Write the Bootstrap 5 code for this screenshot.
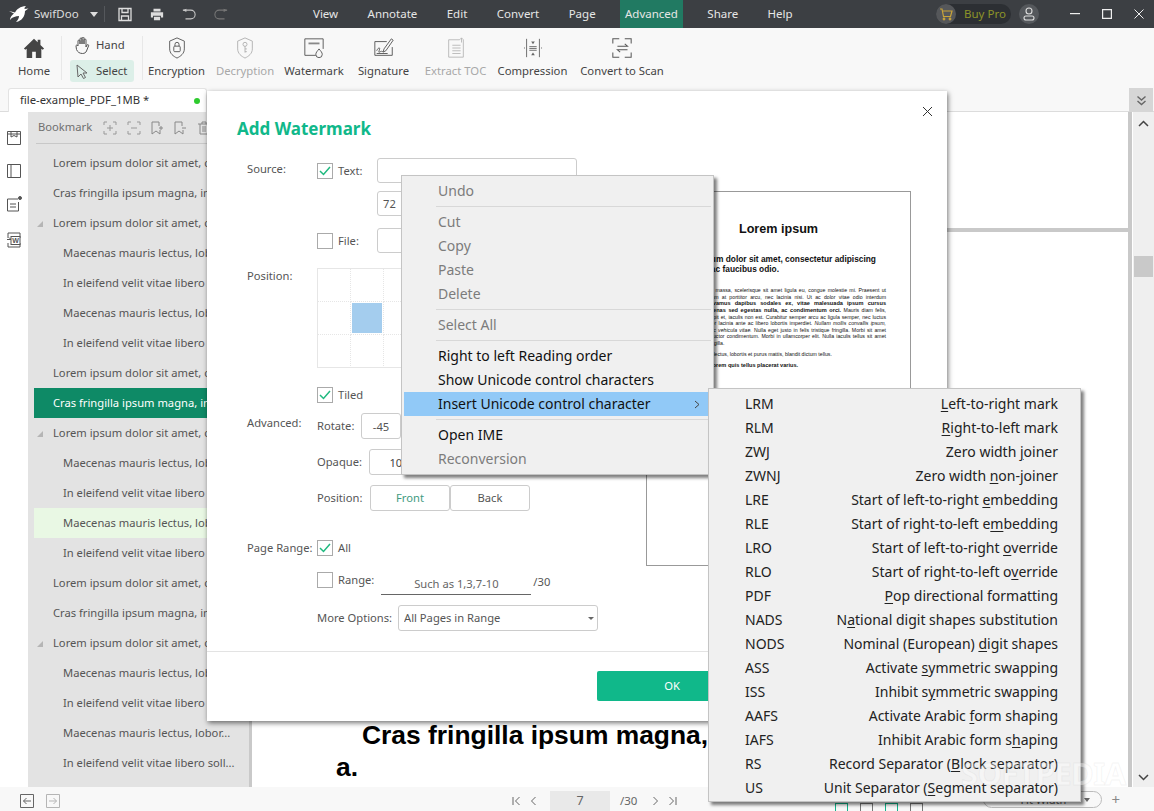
<!DOCTYPE html>
<html lang="en">
<head>
<meta charset="utf-8">
<title>SwifDoo</title>
<link href="https://cdn.jsdelivr.net/npm/bootstrap@5.3.0/dist/css/bootstrap.min.css" rel="stylesheet">
<style>
html,body{height:811px;overflow:hidden}
body{font-family:"Noto Sans","Open Sans",sans-serif;font-size:12px;color:#444;background:#fff}
.app-root{position:relative;height:811px;width:1154px;overflow:hidden}
.title-bar{height:28px;background:#3c3f43;color:#e8e8e8;flex:none}
.brand-name{width:56px;margin-left:4px;color:#ddd;font-size:11.5px}
.tb-sep{width:1px;height:16px;background:#55585c;margin:0 13px 0 6px}
.qa-icon{width:14px;height:15px;margin-right:18px;flex:none}
.qa-last{margin-right:0}
.top-nav{margin-left:80px;gap:19.4px}
.menu-item{height:28px;line-height:28px;font-size:11.5px;color:#e6e6e6;padding:0 5px;flex:none}
.menu-on{background:#217a62}
.top-right{padding-right:10px}
.buy-pill{height:20px;width:75px;border-radius:10px;background:#2c2f33;color:#8c9428;font-size:11.5px;flex:none}
.buy-circle{width:20px;height:20px;border-radius:50%;background:#55575a;margin-right:8px}
.user-circle{width:20px;height:20px;border-radius:50%;background:#55585c;margin-left:8px}
.win-min{margin-left:31px}
.win-next{margin-left:22px}
.ribbon{height:60px;background:#f8f8f8;flex:none;padding-left:9px}
.rib-tool{display:flex;flex-direction:column;align-items:center;flex:none;height:60px;padding-top:9px;color:#444;white-space:nowrap;font-size:11.3px}
.rib-tool svg{height:22px;display:block}
.rib-tool span{margin-top:4px;line-height:16px}
.rib-off{color:#a8a8a8}
.rib-sep{width:1px;height:44px;background:#e8e8e8;margin:8px 0 0 2px;flex:none}
.rib-sep-b{margin-left:8px}
.mode-col{margin:5px 0 0 8px;gap:3px}
.mode-row{height:22px;width:64px;padding-left:5px;font-size:11.3px;border-radius:3px;gap:6px}
.mode-row svg{width:15px;flex:none}
.mode-hand{height:24px}
.mode-on{background:#dcefe8}
.w50{width:50px}
.t-enc{width:57px;margin-left:5px}
.t-dec{width:58px;margin-left:11px}
.t-wat{width:58px;margin-left:11px}
.t-sig{width:51px;margin-left:15px}
.t-toc{width:61px;margin-left:16px}
.t-com{width:69px;margin-left:12px}
.t-con{width:84px;margin-left:13px}
.tab-row{height:24px;background:#f8f8f8;flex:none;border-bottom:1px solid #dcdcdc;position:relative}
.doc-tab{width:199px;height:24px;margin-left:8px;background:#fff;border:1px solid #e3e3e3;border-bottom:0;border-radius:3px 3px 0 0;padding:0 6px 0 11px;font-size:11.3px;color:#333}
.tab-dot{width:6px;height:6px;background:#2ecb2e;border-radius:50%}
.fold-btn{width:24px;height:24px;background:#d6d6d6;margin:0 1px 0 auto}
.work-area{flex:1 1 auto;min-height:0}
.left-rail{width:28px;background:#fff;flex:none;padding-top:17px;gap:15px}
.left-rail svg{width:16px;height:18px}
.rail-last{margin-top:3px}
.side-panel{width:224px;background:#e3e3e3;flex:none;border-right:3px solid #c9c9c9}
.panel-head{height:32px;margin:0 2px 0 8px;padding-left:2px;border-bottom:1px solid #c8c8c8;color:#707070;font-size:11.2px;gap:9.3px;flex:none}
.panel-head svg{width:14px;height:14px;flex:none}
.panel-head span{margin-right:2px}
.bm-list{margin-left:6px;--bs-list-group-bg:transparent;padding-top:4px}
.bm-row{height:30px;line-height:30px;padding:0 0 0 19px;background:transparent;border:0;color:#555;font-size:11.2px;white-space:nowrap;overflow:hidden;position:relative}
.bm-sub{padding-left:29px}
.bm-sel{background:#0e8a66;color:#fff}
.bm-hov{background:#e9f8e4}
.bm-open::before{content:"";position:absolute;left:3px;top:13px;border-left:6px solid transparent;border-bottom:6px solid #b5b5b5}
.doc-view{flex:1 1 auto;min-width:0;background:#fff}
.doc-pages{flex:1 1 auto;min-width:0;border-right:4px solid #c9c9c9}
.page-one{height:116px;border-bottom:4px solid #c9c9c9;flex:none;box-sizing:content-box}
.page-two{padding:487px 0 0 84px;font-family:"Liberation Sans",sans-serif;font-weight:700;font-size:26.4px;line-height:32px;color:#000;text-indent:26px;white-space:nowrap}
.v-scroll{width:21px;background:#efefef;flex:none;margin-left:1px;padding-top:8px}
.v-thumb{width:19px;height:21px;background:#c9c9c9;margin-top:129px}
.v-down{margin:auto 0 6px}
.status-bar{height:24px;background:#f8f8f8;flex:none;color:#555;font-size:11.5px;padding-top:4px;position:relative}
.nav-ic{width:14px;height:14px;margin-left:20px;flex:none}
.nav-ic-b{margin-left:12px}
.page-pager{margin-left:452px;color:#666}
.page-pager svg{width:9px;height:10px}
.pg-gap{margin-left:14px}
.page-box{width:60px;height:20px;line-height:20px;background:#e9e9e9;text-align:center;margin:0 10px 0 12px;font-size:12.5px;align-self:flex-end}
.view-icons{margin-left:158px;gap:12px;align-self:flex-end;height:8px}
.view-ic{width:13px;height:8px;border:1px solid #12b38a;border-bottom:0}
.view-plain{border-color:#777}
.bar-right{padding-right:34px;align-self:flex-end;height:20px}
.fit-pill{width:119px;height:17px;border:1px solid #bbb;border-radius:9px;font-size:11px;line-height:15px;padding-left:36px;position:relative}
.fit-caret{position:absolute;right:11px;top:6px;border:3px solid transparent;border-top:4px solid #666}
.zoom-plus{margin-left:9px;color:#888;font-size:15px;line-height:17px}
/* dialog */
.wm-dialog{position:absolute;left:207px;top:91px;width:740px;height:630px;background:#fff;box-shadow:1px 2px 5px rgba(0,0,0,.55);font-size:11.2px;line-height:16px;color:#555}
.wm-title{color:#10b88a;font-weight:700;font-size:17px;line-height:24px;padding:26px 0 0 30px;height:67px;margin:0}
.wm-close{position:absolute;right:14px;top:15px;width:11px;height:11px}
.wm-form{width:439px;padding-left:40px;flex:none}
.wm-sect{display:flex}
.wm-label{width:70px;flex:none;line-height:16px;white-space:nowrap}
.lb-src{padding-top:3px}
.lb-adv{padding-top:2px}
.wm-col{flex:1 1 auto;min-width:0}
.chk-box{width:16px;height:16px;border:1px solid #aaa;background:#fff;flex:none;display:flex;align-items:center;justify-content:center}
.chk-box svg{width:12px;height:10px}
.chk-row{gap:5px;white-space:nowrap;line-height:16px}
.chk-fix{width:60px}
.wm-input{height:25px;border:1px solid #ccc;border-radius:3px;padding:0 5px;font-size:11.2px;color:#555;background:#fff;box-shadow:none}
.in-wide{width:200px}
.in-num{width:60px}
.in-center{text-align:center}
.in-rot{width:40px;height:26px}
.in-op{width:60px;height:26px;color:#444}
.size-row{margin:8px 0 0 60px}
.mt-12{margin-top:12px}
.mt-10{margin-top:10px}
.mt-15{margin-top:15px}
.mt-16{margin-top:16px}
.mt-19{margin-top:19px}
.mt-29{margin-top:29px}
.pos-grid{display:grid;grid-template-columns:repeat(3,33px);grid-template-rows:repeat(3,33px);width:100px;border:1px solid #e6e6e6;height:100px}
.pos-cell{border-right:1px dotted #e6e6e6;border-bottom:1px dotted #e6e6e6;padding:1px}
.pos-fill{background:#a4cdee;height:100%}
.field-lab{white-space:nowrap}
.fl-44{width:44px}
.fl-52{width:52px}
.fl-53{width:53px}
.fl-81{width:81px}
.order-btn{width:80px;height:26px;padding:0;font-size:11.2px;border:1px solid #ccc;border-radius:3px;color:#555;background:#fff;line-height:24px}
.order-on{color:#3f9b80}
.range-in{width:150px;height:23px;margin-left:7px;border:0;border-bottom:1px solid #666;border-radius:0;text-align:center;padding:0;font-size:11.2px;color:#666;box-shadow:none}
.range-total{margin:2px 0 0 2px}
.select-in{width:200px;height:26px;padding:0 5px;font-size:11.2px;color:#555;border:1px solid #ccc;border-radius:3px;line-height:24px;background-image:url("data:image/svg+xml,%3Csvg xmlns='http://www.w3.org/2000/svg' viewBox='0 0 8 4'%3E%3Cpath fill='%23666' d='M0 0h8L4 4z'/%3E%3C/svg%3E");background-position:right 3px center;background-size:6px 3px;box-shadow:none}
.wm-preview{width:265px;height:375px;margin-top:33px;border:1px solid #999;flex:none;font-family:"Liberation Sans",sans-serif;color:#111;padding:29px 24px 0;overflow:hidden}
.pv-h1{font-size:12.6px;font-weight:700;text-align:center;line-height:16px;margin:0}
.pv-h2{font-size:8.35px;font-weight:700;line-height:9.5px;margin:18px 0 0;white-space:nowrap}
.pv-p{font-size:5.2px;line-height:6.62px;text-align:justify;text-align-last:justify;margin:13px 0 0}
.pv-p b{font-size:5.6px}
.pv-end{text-align-last:left;margin-top:0}
.pv-next{margin-top:4.6px;text-align-last:left}
.wm-foot{position:absolute;left:0;right:0;top:560px;border-top:1px solid #e3e3e3;padding:19px 0 0 390px}
.ok-btn{width:150px;height:30px;background:#10b88a;color:#fff;border:0;border-radius:2px;padding:0;font-size:11.2px}
/* menus */
.ctx-menu{--bs-dropdown-bg:#f0f0f0;--bs-dropdown-border-radius:0;--bs-dropdown-min-width:0;--bs-dropdown-padding-y:3px;--bs-dropdown-padding-x:2px;--bs-dropdown-spacer:0;border:1px solid #c4c4c4;box-shadow:3px 3px 3px rgba(0,0,0,.5);font-size:14px;margin:0}
.ctx-main{left:401px;top:175px;width:313px;z-index:20}
.ctx-item{height:24px;line-height:24px;padding:0 0 0 34px;color:#111;background:transparent;position:relative;white-space:nowrap}
.ctx-off{color:#7c7c7c}
.ctx-act{background:#91c9f7;color:#111}
.ctx-arrow{position:absolute;right:11px;top:8px;width:6px;height:9px}
.ctx-line{height:1px;background:#d8d8d8;margin:3px 0 3px 32px;opacity:1;border:0}
.ctx-sub{left:708px;top:388px;width:373px;z-index:21;padding-bottom:1px}
.sub-item{display:flex;justify-content:space-between;height:24px;line-height:24px;padding:0 20px 0 34px;color:#222;white-space:nowrap}
.sub-item u{text-underline-offset:2px}
.soft-mark{position:absolute;left:961px;top:755px;z-index:30;font-size:31px;font-weight:700;line-height:36px;letter-spacing:-.5px;color:rgba(255,255,255,.38);-webkit-text-stroke:1px rgba(170,170,170,.12)}
</style>
</head>
<body>
<div class="app-root d-flex flex-column">

  <header class="title-bar d-flex align-items-center">
    <svg class="ms-2" width="22" height="18" viewBox="0 0 22 18"><path fill="#fff" d="M1 6l6 1.500C9 4 12 1.500 18 1c-1 1-1.500 1.500-1.500 3l4-.5-3.500 2.500c0 5-3 10-9 11 2-2 3-4 3-6C8 11 4 12 2 15c0-3 2-5 4-6.500z"/></svg>
    <span class="brand-name">SwifDoo</span>
    <svg width="8" height="5" viewBox="0 0 8 5"><path fill="#ddd" d="M0 0h8L4 5z"/></svg>
    <span class="tb-sep"></span>
    <svg class="qa-icon" viewBox="0 0 14 15" fill="none" stroke="#ddd" stroke-width="1.300"><path d="M1 1.500h12v12H1z"/><path d="M4 1.500v4h6v-4M3.500 13.500v-4.500h7v4.500"/></svg>
    <svg class="qa-icon" viewBox="0 0 16 15"><path fill="#ddd" d="M4 1h8v3H4zM1 5h14v6h-2.500V9h-9v2H1zM4.500 10h7v4h-7z"/></svg>
    <svg class="qa-icon" viewBox="0 0 16 13" fill="none" stroke="#c8c8c8" stroke-width="1.200"><path d="M1 1.500h9a4.500 4.500 0 0 1 0 10H4"/><path fill="#c8c8c8" stroke="none" d="M1 1.500 5 0v3.500z"/></svg>
    <svg class="qa-icon qa-last" viewBox="0 0 16 13" fill="none" stroke="#777" stroke-width="1.200"><path d="M15 1.500H6a4.500 4.500 0 0 0 0 10h6"/><path fill="#777" stroke="none" d="M15 1.500 11 0v3.500z"/></svg>
    <nav class="top-nav d-flex align-items-center">
      <span class="menu-item">View</span>
      <span class="menu-item">Annotate</span>
      <span class="menu-item">Edit</span>
      <span class="menu-item">Convert</span>
      <span class="menu-item">Page</span>
      <span class="menu-item menu-on">Advanced</span>
      <span class="menu-item">Share</span>
      <span class="menu-item">Help</span>
    </nav>
    <div class="top-right ms-auto d-flex align-items-center">
      <div class="buy-pill d-flex align-items-center">
        <span class="buy-circle d-flex align-items-center justify-content-center"><svg width="14" height="13" viewBox="0 0 14 13" fill="none" stroke="#c9a43a" stroke-width="1.200"><path d="M1 1h2l1.500 7.500h7L13 3H3.500"/><circle cx="5" cy="11" r=".8"/><circle cx="11" cy="11" r=".8"/></svg></span>Buy Pro
      </div>
      <span class="user-circle d-flex align-items-center justify-content-center"><svg width="12" height="14" viewBox="0 0 12 14" fill="none" stroke="#ddd" stroke-width="1.100"><circle cx="6" cy="4" r="3"/><rect x="1" y="9" width="10" height="4" rx="2"/></svg></span>
      <svg class="win-min" width="10" height="2" viewBox="0 0 10 2"><path fill="#eee" d="M0 0h10v1.200H0z"/></svg>
      <svg class="win-next" width="10" height="10" viewBox="0 0 10 10" fill="none" stroke="#eee" stroke-width="1.200"><path d="M.6.600h8.800v8.800H.6z"/></svg>
      <svg class="win-next" width="10" height="10" viewBox="0 0 10 10" fill="none" stroke="#eee" stroke-width="1"><path d="M.5.500l9 9M9.500.500l-9 9"/></svg>
    </div>
  </header>

  <section class="ribbon d-flex">
    <div class="rib-tool w50"><svg width="24" height="22" viewBox="0 0 24 24"><path fill="#444" d="M12 2 1 12.500l1.500 1.500L4 12.800V23h6v-7h4v7h6V12.800l1.500 1.200 1.500-1.500L19 8.700V3h-3v2.800z"/></svg><span>Home</span></div>
    <div class="rib-sep"></div>
    <div class="mode-col d-flex flex-column">
      <div class="mode-row mode-hand d-flex align-items-center"><svg height="17" viewBox="0 0 15 17" fill="none" stroke="#555" stroke-width="1"><path d="M3 9V4a1 1 0 0 1 2 0v3-5a1 1 0 0 1 2 0v5-6a1 1 0 0 1 2 0v6-4a1 1 0 0 1 2 0v7l1-2c1-1 2 0 1.500 1l-2 5c-.5 1.500-2 2.500-4 2.500-3 0-5-1.500-6-4L1 9c0-1 1-1.500 2 0z"/></svg><span>Hand</span></div>
      <div class="mode-row mode-on d-flex align-items-center"><svg height="15" viewBox="0 0 13 15" fill="none" stroke="#666" stroke-width="1"><path d="M1 1l10 8H7l2.500 4.500-2 1L5 10l-3 3z"/></svg><span>Select</span></div>
    </div>
    <div class="rib-sep rib-sep-b"></div>
    <div class="rib-tool t-enc"><svg width="18" height="22" viewBox="0 0 18 24" fill="none" stroke="#555" stroke-width="1"><path d="M9 1l8 3.500V13c0 5-4 8-8 10-4-2-8-5-8-10V4.500z"/><rect x="5.500" y="10" width="7" height="6" rx="1"/><path d="M6.800 10V8a2.200 2.200 0 0 1 4.400 0v2"/></svg><span>Encryption</span></div>
    <div class="rib-tool rib-off t-dec"><svg width="18" height="22" viewBox="0 0 18 24" fill="none" stroke="#b0b0b0" stroke-width="1"><path d="M9 1l8 3.500V13c0 5-4 8-8 10-4-2-8-5-8-10V4.500z"/><circle cx="9" cy="8" r="2.200"/><path d="M9 10v7M9 13h2M9 16h2"/></svg><span>Decryption</span></div>
    <div class="rib-tool t-wat"><svg width="22" height="22" viewBox="0 0 22 24" fill="none" stroke="#555" stroke-width="1"><path d="M13 20H1V2h20v11"/><path fill="#888" stroke="none" d="M5 6h12v2H5z"/><path d="M16.500 13c2 2.500 3.500 4 3.500 6a3.500 3.500 0 0 1-7 0c0-2 1.500-3.500 3.500-6z"/></svg><span>Watermark</span></div>
    <div class="rib-tool t-sig"><svg width="22" height="22" viewBox="0 0 22 24" fill="none" stroke="#555" stroke-width="1"><path d="M14 5H1v15h19V11"/><path d="M11 13 19 2l2 1.500L13 15l-3 1.500z"/><path d="M3 15c2-4 4-4 3-1s-1 3 1 2 2 0 3 0M3 18h12"/></svg><span>Signature</span></div>
    <div class="rib-tool rib-off t-toc"><svg width="18" height="22" viewBox="0 0 18 24" fill="none" stroke="#b8b8b8" stroke-width="1"><path d="M13 3H1v19h16V3M15 6V1M13 3l2-2 2 2M5 9h9M5 12h9M5 15h9M5 18h9"/></svg><span>Extract TOC</span></div>
    <div class="rib-tool t-com"><svg width="20" height="22" viewBox="0 0 20 24" fill="none" stroke="#666" stroke-width="1"><path d="M3 2v20M17 2v20M6 10.500h8M6 12.500h8M6 14.500h8"/><path fill="#666" stroke="none" d="M10 8 8 5h4zM10 17l-2 3h4zM0 12l1 1v-2zM20 12l-1 1v-2z"/></svg><span>Compression</span></div>
    <div class="rib-tool t-con"><svg width="22" height="22" viewBox="0 0 22 24" fill="none" stroke="#555" stroke-width="1.100"><path d="M1 7V2h7M14 2h7v5M1 17v5h7M14 22h7v-5M6 10h11l-3-2.500M17 14H6l3 2.500"/></svg><span>Convert to Scan</span></div>
  </section>

  <div class="tab-row d-flex">
    <div class="doc-tab d-flex align-items-center justify-content-between"><span>file-example_PDF_1MB *</span><span class="tab-dot"></span></div>
    <div class="fold-btn d-flex align-items-center justify-content-center"><svg width="11" height="11" viewBox="0 0 11 11" fill="none" stroke="#666" stroke-width="1.400"><path d="M1.500 1.500l4 3.500 4-3.500M1.500 6l4 3.500 4-3.500"/></svg></div>
  </div>

  <main class="work-area d-flex">
    <aside class="left-rail d-flex flex-column align-items-center">
      <svg viewBox="0 0 16 18" fill="none" stroke="#555" stroke-width="1"><path d="M1.500 2.500h13v13h-13zM2 5h12M5 3v5l3-1.500 3 1.500V3"/></svg>
      <svg viewBox="0 0 16 18" fill="none" stroke="#555" stroke-width="1"><path d="M1.500 2.500h13v13h-13zM5 2.500v13"/></svg>
      <svg viewBox="0 0 16 18" fill="none" stroke="#555" stroke-width="1"><path d="M12 4H1.500v12h11V7M4 9h6M4 12h6"/><circle fill="#555" cx="14" cy="3" r="1.500"/></svg>
      <svg class="rail-last" viewBox="0 0 16 18" fill="none" stroke="#555" stroke-width="1"><path d="M2 7V2h12v5M2 12v4h12v-4M1 8.500h4l-2-2M1 8.500"/><rect x="5" y="5.500" width="9" height="8" fill="#fff"/><text x="6.300" y="12.300" font-size="7" font-weight="700" fill="#555" stroke="none" font-family="Liberation Sans">W</text></svg>
    </aside>
    <aside class="side-panel d-flex flex-column">
      <div class="panel-head d-flex align-items-center">
        <span>Bookmark</span>
        <svg viewBox="0 0 14 14" fill="none" stroke="#999" stroke-width="1"><path d="M1 4V1h3M10 1h3v3M1 10v3h3M10 13h3v-3M4 7h6M7 4v6"/></svg>
        <svg viewBox="0 0 14 14" fill="none" stroke="#999" stroke-width="1"><path d="M1 4V1h3M10 1h3v3M1 10v3h3M10 13h3v-3M4 7h6"/></svg>
        <svg viewBox="0 0 14 14" fill="none" stroke="#888" stroke-width="1"><path d="M2 1h7v4M2 1v12l4-3 4 3V9M9 7h4M11 5v4"/></svg>
        <svg viewBox="0 0 14 14" fill="none" stroke="#888" stroke-width="1"><path d="M2 1h7v4M2 1v12l4-3 4 3V9M9 7h4"/></svg>
        <svg viewBox="0 0 14 14" fill="none" stroke="#888" stroke-width="1"><path d="M1 3h12M5 3V1h4v2M3 3v10h8V3M6 5v6M8 5v6"/></svg>
      </div>
      <div class="bm-list list-group list-group-flush">
        <div class="list-group-item bm-row">Lorem ipsum dolor sit amet, cons...</div>
        <div class="list-group-item bm-row">Cras fringilla ipsum magna, in frin...</div>
        <div class="list-group-item bm-row bm-open">Lorem ipsum dolor sit amet, cons...</div>
        <div class="list-group-item bm-row bm-sub">Maecenas mauris lectus, lobor...</div>
        <div class="list-group-item bm-row bm-sub">In eleifend velit vitae libero soll...</div>
        <div class="list-group-item bm-row bm-sub">Maecenas mauris lectus, lobor...</div>
        <div class="list-group-item bm-row bm-sub">In eleifend velit vitae libero soll...</div>
        <div class="list-group-item bm-row">Lorem ipsum dolor sit amet, cons...</div>
        <div class="list-group-item bm-row bm-sel">Cras fringilla ipsum magna, in frin...</div>
        <div class="list-group-item bm-row bm-open">Lorem ipsum dolor sit amet, cons...</div>
        <div class="list-group-item bm-row bm-sub">Maecenas mauris lectus, lobor...</div>
        <div class="list-group-item bm-row bm-sub">In eleifend velit vitae libero soll...</div>
        <div class="list-group-item bm-row bm-sub bm-hov">Maecenas mauris lectus, lobor...</div>
        <div class="list-group-item bm-row bm-sub">In eleifend velit vitae libero soll...</div>
        <div class="list-group-item bm-row">Lorem ipsum dolor sit amet, cons...</div>
        <div class="list-group-item bm-row">Cras fringilla ipsum magna, in frin...</div>
        <div class="list-group-item bm-row bm-open">Lorem ipsum dolor sit amet, cons...</div>
        <div class="list-group-item bm-row bm-sub">Maecenas mauris lectus, lobor...</div>
        <div class="list-group-item bm-row bm-sub">In eleifend velit vitae libero soll...</div>
        <div class="list-group-item bm-row bm-sub">Maecenas mauris lectus, lobor...</div>
        <div class="list-group-item bm-row bm-sub">In eleifend velit vitae libero soll...</div>
      </div>
    </aside>
    <div class="doc-view d-flex">
      <div class="doc-pages d-flex flex-column">
        <div class="page-one"></div>
        <div class="page-two">Cras fringilla ipsum magna,<br>a.</div>
      </div>
      <div class="v-scroll d-flex flex-column align-items-center">
        <svg width="11" height="7" viewBox="0 0 11 7" fill="none" stroke="#444" stroke-width="1.500"><path d="M1 6l4.500-4.500L10 6"/></svg>
        <div class="v-thumb"></div>
        <svg class="v-down" width="11" height="7" viewBox="0 0 11 7" fill="none" stroke="#444" stroke-width="1.500"><path d="M1 1l4.500 4.500L10 1"/></svg>
      </div>
    </div>
  </main>

  <footer class="status-bar d-flex align-items-center">
    <svg class="nav-ic" viewBox="0 0 14 14" fill="none" stroke="#666"><path d="M.5.500h13v13H.5zM11 7H3.500M6.500 4l-3 3 3 3"/></svg>
    <svg class="nav-ic nav-ic-b" viewBox="0 0 14 14" fill="none" stroke="#b5b5b5"><path d="M.5.500h13v13H.5zM3 7h7.500M7.500 4l3 3-3 3"/></svg>
    <div class="page-pager d-flex align-items-center">
      <svg viewBox="0 0 9 10" fill="none" stroke="#666"><path d="M1 1v8M7.500 1l-4 4 4 4"/></svg>
      <svg class="ms-2" viewBox="0 0 9 10" fill="none" stroke="#666"><path d="M6.500 1l-4 4 4 4"/></svg>
      <span class="page-box">7</span>
      <span>/30</span>
      <svg class="pg-gap" viewBox="0 0 9 10" fill="none" stroke="#666"><path d="M2.500 1l4 4-4 4"/></svg>
      <svg class="ms-2" viewBox="0 0 9 10" fill="none" stroke="#666"><path d="M1.500 1l4 4-4 4M8 1v8"/></svg>
    </div>
    <div class="view-icons d-flex">
      <span class="view-ic"></span><span class="view-ic view-plain"></span><span class="view-ic"></span><span class="view-ic view-plain"></span>
    </div>
    <div class="bar-right ms-auto d-flex">
      <div class="fit-pill">Fit Width<span class="fit-caret"></span></div>
      <span class="zoom-plus">+</span>
    </div>
  </footer>

  <div class="wm-dialog">
    <h5 class="wm-title">Add Watermark</h5>
    <svg class="wm-close" viewBox="0 0 11 11" fill="none" stroke="#333" stroke-width="1"><path d="M1 1l9 9M10 1l-9 9"/></svg>
    <div class="d-flex">
      <div class="wm-form">
        <div class="wm-sect">
          <div class="wm-label lb-src">Source:</div>
          <div class="wm-col">
            <div class="d-flex align-items-center">
              <label class="chk-row chk-fix d-flex align-items-center"><span class="chk-box"><svg viewBox="0 0 12 10" fill="none" stroke="#1fb97f" stroke-width="1.500"><path d="M1 5l3.500 3.500L11 1"/></svg></span>Text:</label>
              <input class="form-control wm-input in-wide" type="text" aria-label="Text">
            </div>
            <div class="size-row"><input class="form-control wm-input in-num" type="text" value="72" aria-label="Size"></div>
            <div class="d-flex align-items-center mt-12">
              <label class="chk-row chk-fix d-flex align-items-center"><span class="chk-box"></span>File:</label>
              <input class="form-control wm-input in-wide" type="text" aria-label="File">
            </div>
          </div>
        </div>
        <div class="wm-sect mt-15">
          <div class="wm-label">Position:</div>
          <div class="wm-col">
            <div class="pos-grid">
              <div class="pos-cell"></div><div class="pos-cell"></div><div class="pos-cell"></div>
              <div class="pos-cell"></div><div class="pos-cell"><div class="pos-fill"></div></div><div class="pos-cell"></div>
              <div class="pos-cell"></div><div class="pos-cell"></div><div class="pos-cell"></div>
            </div>
          </div>
        </div>
        <div class="wm-sect mt-19">
          <div class="wm-label"></div>
          <label class="chk-row d-flex align-items-center"><span class="chk-box"><svg viewBox="0 0 12 10" fill="none" stroke="#1fb97f" stroke-width="1.500"><path d="M1 5l3.500 3.500L11 1"/></svg></span>Tiled</label>
        </div>
        <div class="wm-sect mt-10">
          <div class="wm-label lb-adv">Advanced:</div>
          <div class="wm-col">
            <div class="d-flex align-items-center"><span class="field-lab fl-44">Rotate:</span><input class="form-control wm-input in-rot in-center" type="text" value="-45" aria-label="Rotate"></div>
            <div class="d-flex align-items-center mt-10"><span class="field-lab fl-52">Opaque:</span><input class="form-control wm-input in-op in-center" type="text" value="100" aria-label="Opaque"></div>
            <div class="d-flex align-items-center mt-10"><span class="field-lab fl-53">Position:</span><button class="btn order-btn order-on" type="button">Front</button><button class="btn order-btn" type="button">Back</button></div>
          </div>
        </div>
        <div class="wm-sect mt-29">
          <div class="wm-label">Page Range:</div>
          <div class="wm-col">
            <label class="chk-row d-flex align-items-center"><span class="chk-box"><svg viewBox="0 0 12 10" fill="none" stroke="#1fb97f" stroke-width="1.500"><path d="M1 5l3.500 3.500L11 1"/></svg></span>All</label>
            <div class="d-flex align-items-start mt-16">
              <label class="chk-row d-flex align-items-center"><span class="chk-box"></span>Range:</label>
              <input class="form-control range-in" type="text" value="Such as 1,3,7-10" aria-label="Range">
              <span class="range-total">/30</span>
            </div>
            <div class="d-flex align-items-center mt-10">
              <span class="field-lab fl-81">More Options:</span>
              <select class="form-select select-in" aria-label="More Options"><option>All Pages in Range</option></select>
            </div>
          </div>
        </div>
      </div>
      <div class="wm-preview">
        <p class="pv-h1">Lorem ipsum</p>
        <p class="pv-h2">Lorem ipsum dolor sit amet, consectetur adipiscing<br>elit. Nunc ac faucibus odio.</p>
        <p class="pv-p">Vestibulum neque massa, scelerisque sit amet ligula eu, congue molestie mi. Praesent ut<br>varius sem. Nullam at porttitor arcu, nec lacinia nisi. Ut ac dolor vitae odio interdum<br>condimentum. <b>Vivamus dapibus sodales ex, vitae malesuada ipsum cursus<br>convallis. Maecenas sed egestas nulla, ac condimentum orci.</b> Mauris diam felis,<br>vulputate ac suscipit et, iaculis non est. Curabitur semper arcu ac ligula semper, nec luctus<br>nisl blandit. Integer lacinia ante ac libero lobortis imperdiet. <i>Nullam mollis convallis ipsum,<br>ac accumsan nunc vehicula vitae.</i> Nulla eget justo in felis tristique fringilla. Morbi sit amet<br>tortor quis risus auctor condimentum. Morbi in ullamcorper elit. Nulla iaculis tellus sit amet</p>
        <p class="pv-p pv-end">mauris tempus fringilla.</p>
        <p class="pv-p pv-next">Maecenas mauris lectus, lobortis et purus mattis, blandit dictum tellus.</p>
        <p class="pv-p pv-next"><b>Maecenas non lorem quis tellus placerat varius.</b></p>
      </div>
    </div>
    <div class="wm-foot"><button class="btn ok-btn" type="button">OK</button></div>
  </div>

  <div class="dropdown-menu show ctx-menu ctx-main">
    <div class="dropdown-item ctx-item ctx-off">Undo</div>
    <hr class="dropdown-divider ctx-line">
    <div class="dropdown-item ctx-item ctx-off">Cut</div>
    <div class="dropdown-item ctx-item ctx-off">Copy</div>
    <div class="dropdown-item ctx-item ctx-off">Paste</div>
    <div class="dropdown-item ctx-item ctx-off">Delete</div>
    <hr class="dropdown-divider ctx-line">
    <div class="dropdown-item ctx-item ctx-off">Select All</div>
    <hr class="dropdown-divider ctx-line">
    <div class="dropdown-item ctx-item">Right to left Reading order</div>
    <div class="dropdown-item ctx-item">Show Unicode control characters</div>
    <div class="dropdown-item ctx-item ctx-act">Insert Unicode control character<svg class="ctx-arrow" viewBox="0 0 6 9" fill="none" stroke="#444"><path d="M1 1l4 3.500-4 3.500"/></svg></div>
    <hr class="dropdown-divider ctx-line">
    <div class="dropdown-item ctx-item">Open IME</div>
    <div class="dropdown-item ctx-item ctx-off">Reconversion</div>
  </div>

  <div class="dropdown-menu show ctx-menu ctx-sub">
    <div class="sub-item"><span>LRM</span><span><u>L</u>eft-to-right mark</span></div>
    <div class="sub-item"><span>RLM</span><span><u>R</u>ight-to-left mark</span></div>
    <div class="sub-item"><span>ZWJ</span><span>Zero width <u>j</u>oiner</span></div>
    <div class="sub-item"><span>ZWNJ</span><span>Zero width <u>n</u>on-joiner</span></div>
    <div class="sub-item"><span>LRE</span><span>Start of left-to-right <u>e</u>mbedding</span></div>
    <div class="sub-item"><span>RLE</span><span>Start of right-to-left e<u>m</u>bedding</span></div>
    <div class="sub-item"><span>LRO</span><span>Start of left-to-right <u>o</u>verride</span></div>
    <div class="sub-item"><span>RLO</span><span>Start of right-to-left o<u>v</u>erride</span></div>
    <div class="sub-item"><span>PDF</span><span><u>P</u>op directional formatting</span></div>
    <div class="sub-item"><span>NADS</span><span>N<u>a</u>tional digit shapes substitution</span></div>
    <div class="sub-item"><span>NODS</span><span>Nominal (European) <u>d</u>igit shapes</span></div>
    <div class="sub-item"><span>ASS</span><span>Activate <u>s</u>ymmetric swapping</span></div>
    <div class="sub-item"><span>ISS</span><span>Inhibit s<u>y</u>mmetric swapping</span></div>
    <div class="sub-item"><span>AAFS</span><span>Activate Arabic <u>f</u>orm shaping</span></div>
    <div class="sub-item"><span>IAFS</span><span>Inhibit Arabic form s<u>h</u>aping</span></div>
    <div class="sub-item"><span>RS</span><span>Record Separator (<u>B</u>lock separator)</span></div>
    <div class="sub-item"><span>US</span><span>Unit Separator (<u>S</u>egment separator)</span></div>
  </div>

  <div class="soft-mark">SOFTPEDIA</div>
</div>
<script src="https://cdn.jsdelivr.net/npm/bootstrap@5.3.0/dist/js/bootstrap.bundle.min.js"></script>
</body>
</html>
